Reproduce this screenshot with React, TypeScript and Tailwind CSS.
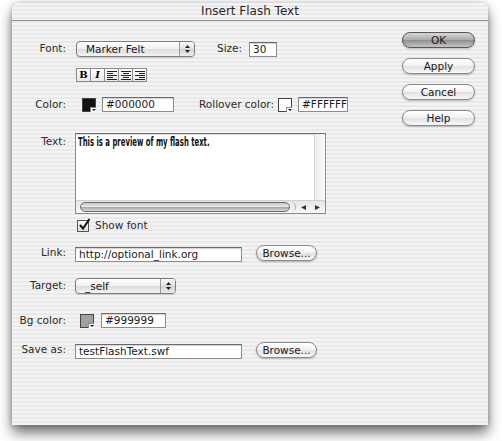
import React from "react";

const stripes =
  "bg-[repeating-linear-gradient(to_bottom,#f4f4f4_0px,#f4f4f4_2px,#e9e9e9_2px,#e9e9e9_4px)]";

function Label({ children, top = false }: { children: React.ReactNode; top?: boolean }) {
  return (
    <div
      className={`w-[55px] shrink-0 text-right pr-[1px] text-[10.5px] text-[#2a2a2a] ${
        top ? "self-start pt-[1px]" : ""
      }`}
    >
      {children}
    </div>
  );
}

function Field({ value, w }: { value: string; w: string }) {
  return (
    <div
      className={`${w} h-[15px] bg-white border border-[#8c8c8c] border-t-[#6a6a6a] shadow-[inset_0_1px_1px_rgba(0,0,0,0.18)] pl-[3px] text-[10.5px] leading-[13px] text-[#1a1a1a] whitespace-nowrap overflow-hidden`}
    >
      {value}
    </div>
  );
}

function Popup({ value, w }: { value: string; w: string }) {
  return (
    <div
      className={`${w} h-[16px] flex rounded-[4px] border border-[#7d7d7d] bg-[linear-gradient(to_bottom,#ffffff,#f0f0f0_50%,#dcdcdc_51%,#f4f4f4)] shadow-[0_1px_1px_rgba(0,0,0,0.15)] overflow-hidden`}
    >
      <div className="flex-1 pl-[9px] text-[10.5px] leading-[14px] text-[#1a1a1a]">{value}</div>
      <div className="w-[15px] border-l border-[#9a9a9a] flex flex-col items-center justify-center gap-[2px] bg-[linear-gradient(to_bottom,#fafafa,#e2e2e2_50%,#d2d2d2_51%,#ededed)]">
        <svg width="5" height="3" viewBox="0 0 5 3">
          <path d="M0 3 L2.5 0 L5 3 Z" fill="#222" />
        </svg>
        <svg width="5" height="3" viewBox="0 0 5 3">
          <path d="M0 0 L2.5 3 L5 0 Z" fill="#222" />
        </svg>
      </div>
    </div>
  );
}

function PushButton({ label, def = false, w }: { label: string; def?: boolean; w: string }) {
  return (
    <div
      className={`${w} h-[16px] rounded-full border text-center text-[10.5px] leading-[14px] text-[#1a1a1a] shadow-[0_1px_2px_rgba(0,0,0,0.25)] ${
        def
          ? "border-[#555] bg-[linear-gradient(to_bottom,#d8d8d8,#a8a8a8_50%,#8f8f8f_51%,#c4c4c4)]"
          : "border-[#8a8a8a] bg-[linear-gradient(to_bottom,#ffffff,#f2f2f2_50%,#e0e0e0_51%,#f8f8f8)]"
      }`}
    >
      {label}
    </div>
  );
}

function Swatch({ fill }: { fill: string }) {
  return (
    <div className="relative w-[14px] h-[14px] border border-[#444]" style={{ background: fill }}>
      <div className="absolute right-[-1px] bottom-[-1px] w-[6px] h-[5px] bg-white border-l border-t border-[#888] flex items-center justify-center">
        <svg width="4" height="2" viewBox="0 0 4 2">
          <path d="M0 0 L2 2 L4 0 Z" fill="#111" />
        </svg>
      </div>
    </div>
  );
}

function AlignIcon({ mode }: { mode: "left" | "center" | "right" }) {
  const lines = [10, 6, 10, 6, 10];
  return (
    <svg width="10" height="9" viewBox="0 0 10 9">
      {lines.map((len, i) => {
        const x = mode === "left" ? 0 : mode === "right" ? 10 - len : (10 - len) / 2;
        return <rect key={i} x={x} y={i * 2} width={len} height="1" fill="#222" />;
      })}
    </svg>
  );
}

function StyleButton({ children }: { children: React.ReactNode }) {
  return (
    <div className="w-[15px] h-[14px] border border-[#8a8a8a] -ml-[1px] first:ml-0 bg-[linear-gradient(to_bottom,#ffffff,#e8e8e8)] flex items-center justify-center">
      {children}
    </div>
  );
}

export default function App() {
  return (
    <div className="w-[502px] h-[441px] bg-white overflow-hidden font-['DejaVu_Sans',sans-serif] pt-[3px] pl-[12px]">
      <div
        className={`w-[476px] h-[422px] rounded-t-[6px] flex flex-col ${stripes} shadow-[0_8px_13px_rgba(0,0,0,0.55),0_0_5px_rgba(0,0,0,0.25)]`}
      >
        {/* title bar */}
        <div className="h-[18px] shrink-0 border-b border-[#8f8f8f] text-center text-[12px] leading-[17px] text-[#2a2a2a] rounded-t-[6px]">
          Insert Flash Text
        </div>

        <div className="flex flex-1">
          {/* form column */}
          <div className="flex-1 flex flex-col pt-[20px]">
            {/* font */}
            <div className="flex items-center h-[16px] gap-[8px]">
              <Label>Font:</Label>
              <div className="ml-[1px]">
                <Popup value="Marker Felt" w="w-[119px]" />
              </div>
              <div className="ml-[14px] text-[10.5px] text-[#2a2a2a]">Size:</div>
              <div className="ml-[-1px]">
                <Field value="30" w="w-[28px]" />
              </div>
            </div>

            {/* style buttons */}
            <div className="flex h-[14px] mt-[11px] ml-[64px]">
              <StyleButton>
                <span className="font-['DejaVu_Serif',serif] font-bold text-[10px] leading-none">B</span>
              </StyleButton>
              <StyleButton>
                <span className="font-['DejaVu_Serif',serif] font-bold italic text-[10px] leading-none">I</span>
              </StyleButton>
              <StyleButton>
                <AlignIcon mode="left" />
              </StyleButton>
              <StyleButton>
                <AlignIcon mode="center" />
              </StyleButton>
              <StyleButton>
                <AlignIcon mode="right" />
              </StyleButton>
            </div>

            {/* colours */}
            <div className="flex items-center h-[15px] mt-[15px] gap-[8px]">
              <Label>Color:</Label>
              <div className="ml-[7px]">
                <Swatch fill="#111" />
              </div>
              <div className="ml-[-2px]">
                <Field value="#000000" w="w-[72px]" />
              </div>
              <div className="ml-[17px] text-[10.5px] text-[#2a2a2a] whitespace-nowrap">Rollover color:</div>
              <div className="ml-[-4px]">
                <Swatch fill="#fff" />
              </div>
              <div className="ml-[-2px]">
                <Field value="#FFFFFF" w="w-[50px]" />
              </div>
            </div>

            {/* preview text */}
            <div className="flex h-[81px] mt-[21px] gap-[8px]">
              <Label top>Text:</Label>
              <div className="w-[251px] h-[81px] border border-[#8c8c8c] border-t-[#6e6e6e] bg-white flex flex-col shadow-[inset_0_1px_1px_rgba(0,0,0,0.15)]">
                <div className="flex flex-1 overflow-hidden">
                  <div className="flex-1 pl-[2px] overflow-hidden">
                    <div className="origin-left scale-x-[0.6] whitespace-nowrap font-bold text-[11.5px] text-[#111]">
                      This is a preview of my flash text.
                    </div>
                  </div>
                  <div className="w-[11px] bg-[linear-gradient(to_right,#ececec,#fafafa)] border-l border-[#d6d6d6]" />
                </div>
                <div className="h-[13px] flex items-center bg-[linear-gradient(to_bottom,#e6e6e6,#f8f8f8)] border-t border-[#d0d0d0]">
                  <div className="ml-[4px] w-[210px] h-[10px] rounded-full border border-[#6f6f6f] bg-[linear-gradient(to_bottom,#c4c4c4,#e8e8e8_45%,#a8a8a8_55%,#d8d8d8)]" />
                  <div className="ml-[1px] w-[5px] h-[10px] rounded-r-full border-r border-[#aaa]" />
                  <div className="flex-1 flex items-center justify-around pr-[1px]">
                    <svg width="5" height="5" viewBox="0 0 5 5">
                      <path d="M5 0 L0 2.5 L5 5 Z" fill="#333" />
                    </svg>
                    <svg width="5" height="5" viewBox="0 0 5 5">
                      <path d="M0 0 L5 2.5 L0 5 Z" fill="#333" />
                    </svg>
                  </div>
                </div>
              </div>
            </div>

            {/* show font */}
            <div className="flex items-center h-[13px] mt-[5px] ml-[65px] gap-[6px]">
              <div className="w-[12px] h-[12px] border border-[#555] bg-[linear-gradient(to_bottom,#fdfdfd,#dcdcdc)] relative">
                <svg className="absolute left-[0px] top-[-3px]" width="13" height="13" viewBox="0 0 13 13">
                  <path d="M2 7 L5 10.5 L11.5 1" stroke="#111" strokeWidth="2" fill="none" />
                </svg>
              </div>
              <div className="text-[10.5px] text-[#2a2a2a]">Show font</div>
            </div>

            {/* link */}
            <div className="flex items-center h-[17px] mt-[12px] gap-[8px]">
              <Label>Link:</Label>
              <div className="mt-[3px]">
                <Field value="http://optional_link.org" w="w-[167px]" />
              </div>
              <div className="ml-[6px]">
                <PushButton label="Browse..." w="w-[61px]" />
              </div>
            </div>

            {/* target */}
            <div className="flex items-center h-[16px] mt-[17px] gap-[8px]">
              <Label>Target:</Label>
              <Popup value="_self" w="w-[101px]" />
            </div>

            {/* background colour */}
            <div className="flex items-center h-[15px] mt-[19px] gap-[8px]">
              <Label>Bg color:</Label>
              <div className="ml-[5px]">
                <Swatch fill="#a0a0a0" />
              </div>
              <div className="ml-[-1px]">
                <Field value="#999999" w="w-[65px]" />
              </div>
            </div>

            {/* save as */}
            <div className="flex items-center h-[17px] mt-[13px] gap-[8px]">
              <Label>Save as:</Label>
              <div className="mt-[3px]">
                <Field value="testFlashText.swf" w="w-[167px]" />
              </div>
              <div className="ml-[6px]">
                <PushButton label="Browse..." w="w-[61px]" />
              </div>
            </div>
          </div>

          {/* dialog buttons */}
          <div className="w-[73px] mr-[13px] pt-[11px] flex flex-col gap-[10px]">
            <PushButton label="OK" def w="w-[73px]" />
            <PushButton label="Apply" w="w-[73px]" />
            <PushButton label="Cancel" w="w-[73px]" />
            <PushButton label="Help" w="w-[73px]" />
          </div>
        </div>
      </div>
    </div>
  );
}
